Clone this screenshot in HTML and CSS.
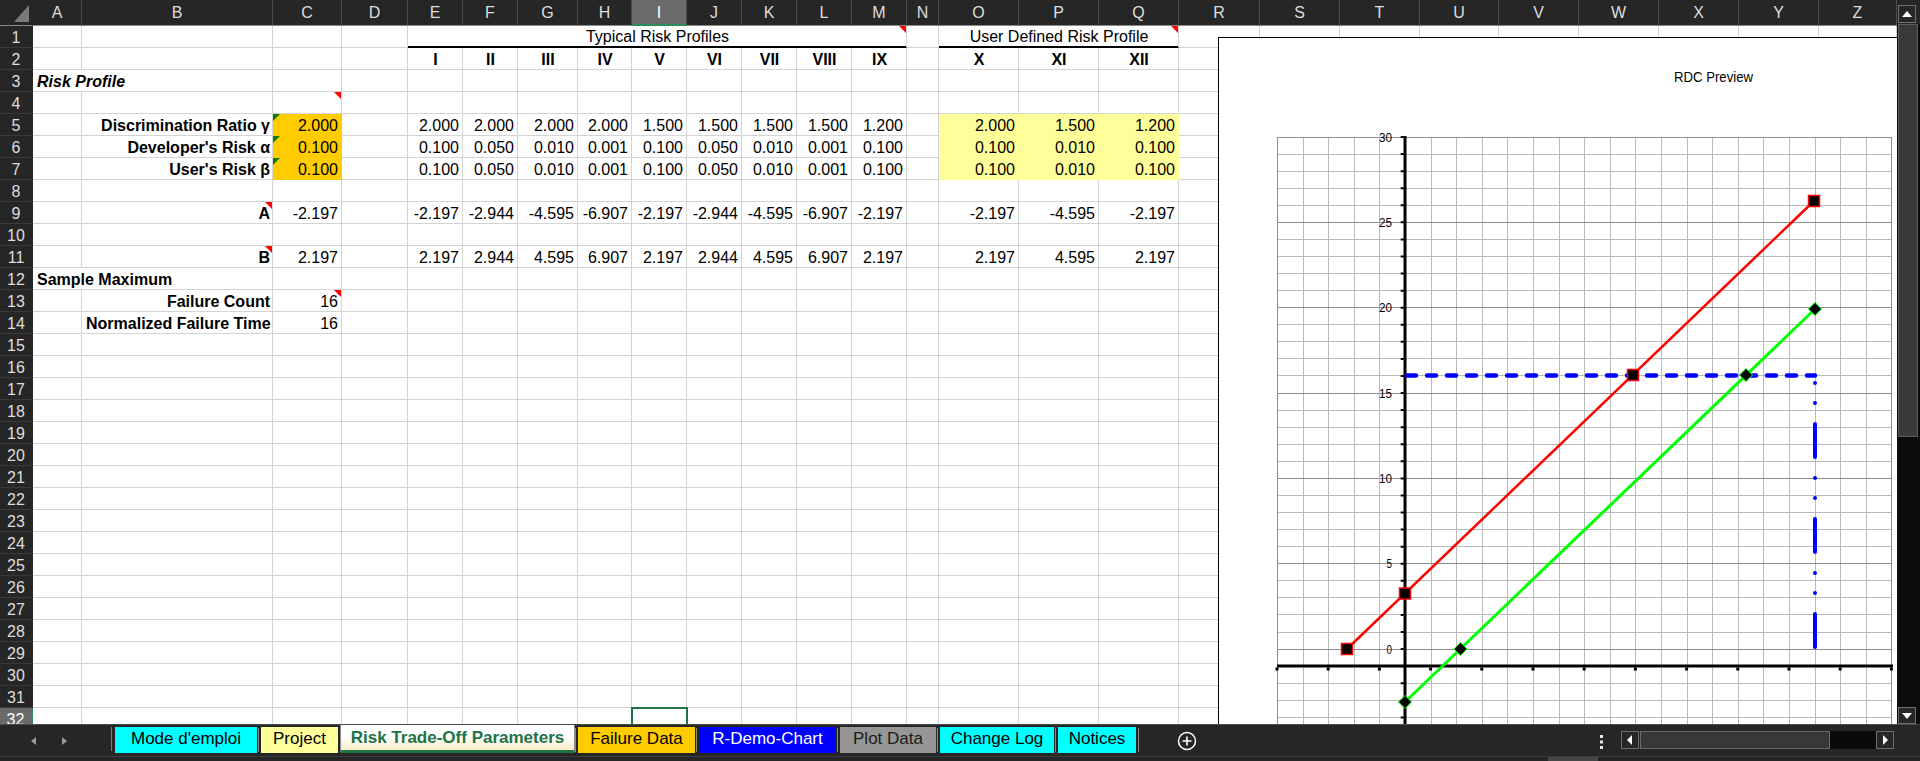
FILE: index.html
```html
<!DOCTYPE html>
<html lang="en">
<head>
<meta charset="utf-8">
<title>Risk Trade-Off Parameters</title>
<link rel="stylesheet" href="styles.css">
</head>
<body>
<div class="app">
  <div class="main">
    <div class="sheet-wrap">
      <table class="sheet">
        <colgroup>
          <col class="cw-rh"><col class="cw-a"><col class="cw-b"><col class="cw-c"><col class="cw-d">
          <col class="cw-55"><col class="cw-55"><col class="cw-g"><col class="cw-h"><col class="cw-55">
          <col class="cw-55"><col class="cw-55"><col class="cw-55"><col class="cw-55"><col class="cw-n">
          <col class="cw-80"><col class="cw-80"><col class="cw-80"><col class="cw-r"><col class="cw-80">
          <col class="cw-80"><col class="cw-u"><col class="cw-80"><col class="cw-80"><col class="cw-80">
          <col class="cw-80"><col class="cw-z">
        </colgroup>
        <thead>
          <tr>
            <th class="corner"></th><th>A</th><th>B</th><th>C</th><th>D</th><th>E</th><th>F</th><th>G</th><th>H</th><th class="sel">I</th><th>J</th><th>K</th><th>L</th><th>M</th><th>N</th><th>O</th><th>P</th><th>Q</th><th>R</th><th>S</th><th>T</th><th>U</th><th>V</th><th>W</th><th>X</th><th>Y</th><th>Z</th>
          </tr>
        </thead>
        <tbody>
          <tr><th>1</th><td></td><td></td><td></td><td></td><td colspan="9" class="ttl cm">Typical Risk Profiles</td><td></td><td colspan="3" class="ttl cm">User Defined Risk Profile</td><td></td><td></td><td></td><td></td><td></td><td></td><td></td><td></td><td></td></tr>
          <tr><th>2</th><td></td><td></td><td></td><td></td><td class="c b">I</td><td class="c b">II</td><td class="c b">III</td><td class="c b">IV</td><td class="c b">V</td><td class="c b">VI</td><td class="c b">VII</td><td class="c b">VIII</td><td class="c b">IX</td><td></td><td class="c b">X</td><td class="c b">XI</td><td class="c b">XII</td><td></td><td></td><td></td><td></td><td></td><td></td><td></td><td></td><td></td></tr>
          <tr><th>3</th><td colspan="2" class="l bi">Risk Profile</td><td></td><td></td><td></td><td></td><td></td><td></td><td></td><td></td><td></td><td></td><td></td><td></td><td></td><td></td><td></td><td></td><td></td><td></td><td></td><td></td><td></td><td></td><td></td></tr>
          <tr><th>4</th><td></td><td></td><td class="cm"></td><td></td><td></td><td></td><td></td><td></td><td></td><td></td><td></td><td></td><td></td><td></td><td></td><td></td><td></td><td></td><td></td><td></td><td></td><td></td><td></td><td></td><td></td><td></td></tr>
          <tr><th>5</th><td></td><td class="r b lbl">Discrimination Ratio γ</td><td class="r inp gt">2.000</td><td></td><td class="r">2.000</td><td class="r">2.000</td><td class="r">2.000</td><td class="r">2.000</td><td class="r">1.500</td><td class="r">1.500</td><td class="r">1.500</td><td class="r">1.500</td><td class="r">1.200</td><td></td><td class="r uy">2.000</td><td class="r uy">1.500</td><td class="r uy">1.200</td><td></td><td></td><td></td><td></td><td></td><td></td><td></td><td></td><td></td></tr>
          <tr><th>6</th><td></td><td class="r b lbl">Developer's Risk α</td><td class="r inp gt">0.100</td><td></td><td class="r">0.100</td><td class="r">0.050</td><td class="r">0.010</td><td class="r">0.001</td><td class="r">0.100</td><td class="r">0.050</td><td class="r">0.010</td><td class="r">0.001</td><td class="r">0.100</td><td></td><td class="r uy">0.100</td><td class="r uy">0.010</td><td class="r uy">0.100</td><td></td><td></td><td></td><td></td><td></td><td></td><td></td><td></td><td></td></tr>
          <tr><th>7</th><td></td><td class="r b lbl">User's Risk β</td><td class="r inp gt">0.100</td><td></td><td class="r">0.100</td><td class="r">0.050</td><td class="r">0.010</td><td class="r">0.001</td><td class="r">0.100</td><td class="r">0.050</td><td class="r">0.010</td><td class="r">0.001</td><td class="r">0.100</td><td></td><td class="r uy">0.100</td><td class="r uy">0.010</td><td class="r uy">0.100</td><td></td><td></td><td></td><td></td><td></td><td></td><td></td><td></td><td></td></tr>
          <tr><th>8</th><td></td><td></td><td></td><td></td><td></td><td></td><td></td><td></td><td></td><td></td><td></td><td></td><td></td><td></td><td></td><td></td><td></td><td></td><td></td><td></td><td></td><td></td><td></td><td></td><td></td><td></td></tr>
          <tr><th>9</th><td></td><td class="r b lbl cm">A</td><td class="r">-2.197</td><td></td><td class="r">-2.197</td><td class="r">-2.944</td><td class="r">-4.595</td><td class="r">-6.907</td><td class="r">-2.197</td><td class="r">-2.944</td><td class="r">-4.595</td><td class="r">-6.907</td><td class="r">-2.197</td><td></td><td class="r">-2.197</td><td class="r">-4.595</td><td class="r">-2.197</td><td></td><td></td><td></td><td></td><td></td><td></td><td></td><td></td><td></td></tr>
          <tr><th>10</th><td></td><td></td><td></td><td></td><td></td><td></td><td></td><td></td><td></td><td></td><td></td><td></td><td></td><td></td><td></td><td></td><td></td><td></td><td></td><td></td><td></td><td></td><td></td><td></td><td></td><td></td></tr>
          <tr><th>11</th><td></td><td class="r b lbl cm">B</td><td class="r">2.197</td><td></td><td class="r">2.197</td><td class="r">2.944</td><td class="r">4.595</td><td class="r">6.907</td><td class="r">2.197</td><td class="r">2.944</td><td class="r">4.595</td><td class="r">6.907</td><td class="r">2.197</td><td></td><td class="r">2.197</td><td class="r">4.595</td><td class="r">2.197</td><td></td><td></td><td></td><td></td><td></td><td></td><td></td><td></td><td></td></tr>
          <tr><th>12</th><td colspan="2" class="l b">Sample Maximum</td><td></td><td></td><td></td><td></td><td></td><td></td><td></td><td></td><td></td><td></td><td></td><td></td><td></td><td></td><td></td><td></td><td></td><td></td><td></td><td></td><td></td><td></td><td></td></tr>
          <tr><th>13</th><td></td><td class="r b lbl">Failure Count</td><td class="r cm">16</td><td></td><td></td><td></td><td></td><td></td><td></td><td></td><td></td><td></td><td></td><td></td><td></td><td></td><td></td><td></td><td></td><td></td><td></td><td></td><td></td><td></td><td></td><td></td></tr>
          <tr><th>14</th><td></td><td class="r b lbl">Normalized Failure Time</td><td class="r">16</td><td></td><td></td><td></td><td></td><td></td><td></td><td></td><td></td><td></td><td></td><td></td><td></td><td></td><td></td><td></td><td></td><td></td><td></td><td></td><td></td><td></td><td></td><td></td></tr>
          <tr><th>15</th><td></td><td></td><td></td><td></td><td></td><td></td><td></td><td></td><td></td><td></td><td></td><td></td><td></td><td></td><td></td><td></td><td></td><td></td><td></td><td></td><td></td><td></td><td></td><td></td><td></td><td></td></tr>
          <tr><th>16</th><td></td><td></td><td></td><td></td><td></td><td></td><td></td><td></td><td></td><td></td><td></td><td></td><td></td><td></td><td></td><td></td><td></td><td></td><td></td><td></td><td></td><td></td><td></td><td></td><td></td><td></td></tr>
          <tr><th>17</th><td></td><td></td><td></td><td></td><td></td><td></td><td></td><td></td><td></td><td></td><td></td><td></td><td></td><td></td><td></td><td></td><td></td><td></td><td></td><td></td><td></td><td></td><td></td><td></td><td></td><td></td></tr>
          <tr><th>18</th><td></td><td></td><td></td><td></td><td></td><td></td><td></td><td></td><td></td><td></td><td></td><td></td><td></td><td></td><td></td><td></td><td></td><td></td><td></td><td></td><td></td><td></td><td></td><td></td><td></td><td></td></tr>
          <tr><th>19</th><td></td><td></td><td></td><td></td><td></td><td></td><td></td><td></td><td></td><td></td><td></td><td></td><td></td><td></td><td></td><td></td><td></td><td></td><td></td><td></td><td></td><td></td><td></td><td></td><td></td><td></td></tr>
          <tr><th>20</th><td></td><td></td><td></td><td></td><td></td><td></td><td></td><td></td><td></td><td></td><td></td><td></td><td></td><td></td><td></td><td></td><td></td><td></td><td></td><td></td><td></td><td></td><td></td><td></td><td></td><td></td></tr>
          <tr><th>21</th><td></td><td></td><td></td><td></td><td></td><td></td><td></td><td></td><td></td><td></td><td></td><td></td><td></td><td></td><td></td><td></td><td></td><td></td><td></td><td></td><td></td><td></td><td></td><td></td><td></td><td></td></tr>
          <tr><th>22</th><td></td><td></td><td></td><td></td><td></td><td></td><td></td><td></td><td></td><td></td><td></td><td></td><td></td><td></td><td></td><td></td><td></td><td></td><td></td><td></td><td></td><td></td><td></td><td></td><td></td><td></td></tr>
          <tr><th>23</th><td></td><td></td><td></td><td></td><td></td><td></td><td></td><td></td><td></td><td></td><td></td><td></td><td></td><td></td><td></td><td></td><td></td><td></td><td></td><td></td><td></td><td></td><td></td><td></td><td></td><td></td></tr>
          <tr><th>24</th><td></td><td></td><td></td><td></td><td></td><td></td><td></td><td></td><td></td><td></td><td></td><td></td><td></td><td></td><td></td><td></td><td></td><td></td><td></td><td></td><td></td><td></td><td></td><td></td><td></td><td></td></tr>
          <tr><th>25</th><td></td><td></td><td></td><td></td><td></td><td></td><td></td><td></td><td></td><td></td><td></td><td></td><td></td><td></td><td></td><td></td><td></td><td></td><td></td><td></td><td></td><td></td><td></td><td></td><td></td><td></td></tr>
          <tr><th>26</th><td></td><td></td><td></td><td></td><td></td><td></td><td></td><td></td><td></td><td></td><td></td><td></td><td></td><td></td><td></td><td></td><td></td><td></td><td></td><td></td><td></td><td></td><td></td><td></td><td></td><td></td></tr>
          <tr><th>27</th><td></td><td></td><td></td><td></td><td></td><td></td><td></td><td></td><td></td><td></td><td></td><td></td><td></td><td></td><td></td><td></td><td></td><td></td><td></td><td></td><td></td><td></td><td></td><td></td><td></td><td></td></tr>
          <tr><th>28</th><td></td><td></td><td></td><td></td><td></td><td></td><td></td><td></td><td></td><td></td><td></td><td></td><td></td><td></td><td></td><td></td><td></td><td></td><td></td><td></td><td></td><td></td><td></td><td></td><td></td><td></td></tr>
          <tr><th>29</th><td></td><td></td><td></td><td></td><td></td><td></td><td></td><td></td><td></td><td></td><td></td><td></td><td></td><td></td><td></td><td></td><td></td><td></td><td></td><td></td><td></td><td></td><td></td><td></td><td></td><td></td></tr>
          <tr><th>30</th><td></td><td></td><td></td><td></td><td></td><td></td><td></td><td></td><td></td><td></td><td></td><td></td><td></td><td></td><td></td><td></td><td></td><td></td><td></td><td></td><td></td><td></td><td></td><td></td><td></td><td></td></tr>
          <tr><th>31</th><td></td><td></td><td></td><td></td><td></td><td></td><td></td><td></td><td></td><td></td><td></td><td></td><td></td><td></td><td></td><td></td><td></td><td></td><td></td><td></td><td></td><td></td><td></td><td></td><td></td><td></td></tr>
          <tr><th class="sel">32</th><td></td><td></td><td></td><td></td><td></td><td></td><td></td><td></td><td class="selcell"></td><td></td><td></td><td></td><td></td><td></td><td></td><td></td><td></td><td></td><td></td><td></td><td></td><td></td><td></td><td></td><td></td><td></td></tr>
        </tbody>
      </table>

      <svg class="chart" width="700" height="700" viewBox="1218 37 700 700">
        <rect x="1218.5" y="37.5" width="720" height="720" fill="#fff" stroke="#000" stroke-width="1"/>
        <text class="chart-title" x="1674" y="82" textLength="79" lengthAdjust="spacingAndGlyphs">RDC Preview</text>
        <path fill="none" stroke="#bababa" stroke-width="1" shape-rendering="crispEdges" d="M1277 154.5h615M1277 171.5h615M1277 188.5h615M1277 205.5h615M1277 239.5h615M1277 256.5h615M1277 273.5h615M1277 290.5h615M1277 324.5h615M1277 341.5h615M1277 358.5h615M1277 375.5h615M1277 410.5h615M1277 427.5h615M1277 444.5h615M1277 461.5h615M1277 495.5h615M1277 512.5h615M1277 529.5h615M1277 546.5h615M1277 580.5h615M1277 597.5h615M1277 614.5h615M1277 632.5h615M1277 666.5h615M1277 683.5h615M1277 700.5h615M1277 717.5h615M1303.5 137v620M1328.5 137v620M1354.5 137v620M1379.5 137v620M1431.5 137v620M1456.5 137v620M1482.5 137v620M1507.5 137v620M1533.5 137v620M1559.5 137v620M1584.5 137v620M1610.5 137v620M1635.5 137v620M1661.5 137v620M1687.5 137v620M1712.5 137v620M1738.5 137v620M1763.5 137v620M1789.5 137v620M1815.5 137v620M1840.5 137v620M1866.5 137v620"/>
        <path fill="none" stroke="#8e8e8e" stroke-width="1" shape-rendering="crispEdges" d="M1277 137.5h615M1277 222.5h615M1277 307.5h615M1277 393.5h615M1277 478.5h615M1277 563.5h615M1277 649.5h615M1277 734.5h615M1277.5 137v620M1891.5 137v620"/>
        <path fill="none" stroke="#000" stroke-width="3" d="M1405 136V760M1277 666H1893"/>
        <path fill="none" stroke="#000" stroke-width="3" stroke-dasharray="2 15.07" d="M1402.2 136V760"/>
        <path fill="none" stroke="#000" stroke-width="3" stroke-dasharray="3 48.2" d="M1275.5 669H1895"/>
        <g class="axis-lbl">
          <text x="1392" y="141.5" textLength="13" lengthAdjust="spacingAndGlyphs">30</text>
          <text x="1392" y="226.8" textLength="13" lengthAdjust="spacingAndGlyphs">25</text>
          <text x="1392" y="312.2" textLength="13" lengthAdjust="spacingAndGlyphs">20</text>
          <text x="1392" y="397.5" textLength="13" lengthAdjust="spacingAndGlyphs">15</text>
          <text x="1392" y="482.9" textLength="13" lengthAdjust="spacingAndGlyphs">10</text>
          <text x="1392" y="568.2" textLength="5.5" lengthAdjust="spacingAndGlyphs">5</text>
          <text x="1392" y="653.6" textLength="5.5" lengthAdjust="spacingAndGlyphs">0</text>
        </g>
        <path fill="none" stroke="#0000ff" stroke-width="4.5" stroke-linecap="round" stroke-dasharray="9 11" d="M1407 375.5H1815"/>
        <path fill="none" stroke="#0000ff" stroke-width="4" stroke-linecap="round" stroke-dasharray="33 21 0 20 0 21" d="M1815 647V377"/>
        <path fill="none" stroke="#ff0000" stroke-width="2.5" d="M1347 649L1814 201"/>
        <path fill="none" stroke="#00ff00" stroke-width="3" d="M1405 702L1815 309"/>
        <g fill="#000" stroke="#ff0000" stroke-width="1.5">
          <rect x="1341.5" y="643.5" width="11" height="11"/>
          <rect x="1399.5" y="588" width="11" height="11"/>
          <rect x="1627.5" y="369.5" width="11" height="11"/>
          <rect x="1808.5" y="195.5" width="11" height="11"/>
        </g>
        <g fill="#000" stroke="#00ff00" stroke-width="1">
          <polygon points="1405,695.5 1411.5,702 1405,708.5 1398.5,702"/>
          <polygon points="1460.5,642.5 1467,649 1460.5,655.5 1454,649"/>
          <polygon points="1746,368.5 1752.5,375 1746,381.5 1739.5,375"/>
          <polygon points="1815,302.5 1821.5,309 1815,315.5 1808.5,309"/>
        </g>
      </svg>
    </div>

    <div class="vscroll">
      <div class="vs-head">
        <div class="vs-btn">
          <svg width="16" height="16" viewBox="0 0 16 16"><polygon points="3,11 8,5 13,11" fill="#fff"/></svg>
        </div>
      </div>
      <div class="vs-thumb"></div>
      <div class="vs-track"></div>
      <div class="vs-btn vs-down">
        <svg width="16" height="16" viewBox="0 0 16 16"><polygon points="3,5 8,11 13,5" fill="#fff"/></svg>
      </div>
    </div>
  </div>

  <div class="tabbar">
    <div class="tabnav">
      <svg width="80" height="24" viewBox="0 0 80 24">
        <polygon points="36,10 31,14 36,18" fill="#9b9b9b"/>
        <polygon points="62,10 67,14 62,18" fill="#9b9b9b"/>
      </svg>
    </div>
    <div class="tab t-mode">Mode d'emploi</div>
    <div class="tab t-proj">Project</div>
    <div class="tab t-active">Risk Trade-Off Parameters</div>
    <div class="tab t-fail">Failure Data</div>
    <div class="tab t-demo">R-Demo-Chart</div>
    <div class="tab t-plot">Plot Data</div>
    <div class="tab t-log">Change Log</div>
    <div class="tab t-notice">Notices</div>
    <div class="tab-end"></div>
    <svg class="addsheet" width="20" height="20" viewBox="0 0 20 20">
      <circle cx="10" cy="10" r="8.5" fill="none" stroke="#fff" stroke-width="1.5"/>
      <path d="M10 5.5V14.5M5.5 10H14.5" stroke="#fff" stroke-width="1.6"/>
    </svg>
    <div class="tabbar-right">
      <svg class="kebab" width="6" height="16" viewBox="0 0 6 16">
        <rect x="1" y="1" width="3" height="3" fill="#e6e6e6"/>
        <rect x="1" y="6.5" width="3" height="3" fill="#e6e6e6"/>
        <rect x="1" y="12" width="3" height="3" fill="#e6e6e6"/>
      </svg>
      <div class="hscroll">
        <div class="hs-btn">
          <svg width="16" height="16" viewBox="0 0 16 16"><polygon points="10,3 5,8 10,13" fill="#fff"/></svg>
        </div>
        <div class="hs-thumb"></div>
        <div class="hs-track"></div>
        <div class="hs-btn">
          <svg width="16" height="16" viewBox="0 0 16 16"><polygon points="6,3 11,8 6,13" fill="#fff"/></svg>
        </div>
      </div>
    </div>
  </div>
  <div class="status">
    <div class="status-line"></div>
    <div class="status-grip"></div>
  </div>
</div>
</body>
</html>
```

FILE: styles.css
```css
* { box-sizing: border-box; }
html, body { margin: 0; padding: 0; }
body {
  width: 1920px;
  height: 761px;
  overflow: hidden;
  background: #262626;
  font-family: "Liberation Sans", Arial, sans-serif;
}
.app { display: flex; flex-direction: column; width: 1920px; height: 761px; }
.main { display: flex; height: 724px; }

.sheet-wrap {
  position: relative;
  width: 1897px;
  height: 724px;
  overflow: hidden;
  background: #fff;
}

/* ---------- grid ---------- */
.sheet {
  table-layout: fixed;
  border-collapse: separate;
  border-spacing: 0;
  width: 1897px;
  font-size: 16px;
  color: #000;
}
col.cw-rh { width: 33px; }
col.cw-a { width: 49px; }
col.cw-b { width: 191px; }
col.cw-c { width: 69px; }
col.cw-d { width: 66px; }
col.cw-55 { width: 55px; }
col.cw-g { width: 60px; }
col.cw-h { width: 54px; }
col.cw-n { width: 32px; }
col.cw-80 { width: 80px; }
col.cw-r { width: 81px; }
col.cw-u { width: 79px; }
col.cw-z { width: 78px; }

.sheet tr { height: 22px; }
.sheet thead tr { height: 26px; }
.sheet td, .sheet th {
  position: relative;
  padding: 3px 3px 0 4px;
  line-height: 18px;
  vertical-align: top;
  white-space: nowrap;
  overflow: hidden;
  font-weight: normal;
  border-right: 1px solid #d4d4d4;
  border-bottom: 1px solid #d4d4d4;
}
.sheet thead th {
  background: #262626;
  color: #dedede;
  text-align: center;
  padding: 4px 0 0;
  border-right: 1px solid #4c4c4c;
  border-bottom: 1px solid #8a8a8a;
}
.sheet thead th.sel {
  background: #6a6a6a;
  color: #fff;
  border-bottom: 2px solid #2b8a57;
}
.sheet thead th.corner { border-right: 1px solid #262626; }
.sheet thead th.corner::after {
  content: "";
  position: absolute;
  right: 3px;
  bottom: 3px;
  border-style: solid;
  border-width: 0 0 17px 15px;
  border-color: transparent transparent #7a7a7a transparent;
}
.sheet tbody th {
  background: #262626;
  color: #dedede;
  text-align: center;
  padding: 3px 0 0;
  border-right: 1px solid #262626;
  border-bottom: 1px solid #3a3a3a;
}
.sheet tbody th.sel {
  background: #6a6a6a;
  color: #fff;
  border-right: 2px solid #2b8a57;
}

.sheet td.r { text-align: right; }
.sheet td.c { text-align: center; }
.sheet td.l { text-align: left; }
.sheet td.b { font-weight: bold; }
.sheet td.bi { font-weight: bold; font-style: italic; }
.sheet td.lbl { padding-right: 2px; }
.sheet td.ttl {
  text-align: center;
  padding-top: 2px;
  border-bottom: 1px solid #000;
  box-shadow: inset 0 -1px 0 #000;
}
.sheet td.inp { background: #ffcc00; border-color: #ffcc00; }
.sheet td.uy { background: #ffff99; border-color: #ffff99; }

.cm::after {
  content: "";
  position: absolute;
  top: 0;
  right: 0;
  border-style: solid;
  border-width: 0 7px 7px 0;
  border-color: transparent #ff0000 transparent transparent;
}
.gt::before {
  content: "";
  position: absolute;
  top: 0;
  left: 0;
  border-style: solid;
  border-width: 7px 7px 0 0;
  border-color: #127a12 transparent transparent transparent;
}
.sheet td.selcell {
  outline: 2px solid #217346;
  outline-offset: -1px;
  z-index: 2;
}

/* ---------- chart ---------- */
.chart {
  position: absolute;
  left: 1218px;
  top: 37px;
  z-index: 5;
}
.chart-title {
  font-family: "Liberation Sans Narrow", "Liberation Sans", Arial, sans-serif;
  font-size: 14px;
  fill: #000;
}
.axis-lbl text {
  font-family: "Liberation Sans Narrow", "Liberation Sans", Arial, sans-serif;
  font-size: 12px;
  fill: #000;
  text-anchor: end;
}

/* ---------- vertical scrollbar ---------- */
.vscroll {
  width: 23px;
  height: 724px;
  display: flex;
  flex-direction: column;
  background: #0b0b0b;
}
.vs-head {
  height: 24px;
  background: #262626;
  padding: 5px 0 0 1px;
}
.vs-btn {
  width: 18px;
  height: 18px;
  border: 1px solid #6e6e6e;
  background: #262626;
  display: flex;
  align-items: center;
  justify-content: center;
}
.vs-thumb {
  height: 413px;
  margin-left: 1px;
  width: 20px;
  background: #3a3a3a;
  border: 1px solid #5c5c5c;
}
.vs-track { flex: 1; }
.vs-down { margin-left: 1px; height: 17px; }

/* ---------- tab bar ---------- */
.tabbar {
  height: 29px;
  display: flex;
  align-items: flex-start;
  background: #262626;
  border-top: 1px solid #4a4a4a;
}
.tabnav {
  width: 112px;
  height: 24px;
  margin-top: 2px;
  border-right: 1px solid #7e7e7e;
}
.tabnav svg { display: block; }
.tab {
  position: relative;
  height: 26px;
  margin-top: 2px;
  margin-left: 4px;
  font-size: 17px;
  line-height: 23px;
  text-align: center;
  white-space: nowrap;
  color: #000;
}
.tab::before {
  content: "";
  position: absolute;
  left: -3px;
  top: 1px;
  bottom: 1px;
  width: 1px;
  background: #8a8a8a;
}
.t-mode { width: 142px; margin-left: 3px; background: #00ffff; }
.t-mode::before { display: none; }
.t-proj { width: 77px; background: #ffff99; }
.t-active {
  width: 235px;
  height: 28px;
  margin-top: 0;
  margin-left: 2px;
  line-height: 25px;
  font-weight: bold;
  color: #217346;
  background: linear-gradient(#ffffff 45%, #fbefc6);
  border-left: 1px solid #8a8a8a;
  border-right: 1px solid #8a8a8a;
  border-bottom: 3px solid #217346;
}
.t-active::before { display: none; }
.t-fail { width: 117px; margin-left: 3px; background: #ffcc00; }
.t-demo { width: 137px; background: #0000ff; color: #fff; }
.t-plot { width: 96px; background: #969696; color: #1a1a1a; }
.t-log { width: 114px; background: #00ffff; }
.t-notice { width: 78px; background: #00ffff; }
.tab-end {
  width: 1px;
  height: 24px;
  margin-top: 3px;
  margin-left: 2px;
  background: #8a8a8a;
}
.addsheet { margin-left: 38px; margin-top: 6px; display: block; }

.tabbar-right {
  margin-left: auto;
  margin-right: 26px;
  display: flex;
  align-items: flex-start;
}
.kebab { display: block; margin-top: 9px; margin-right: 16px; }
.hscroll {
  display: flex;
  height: 18px;
  margin-top: 6px;
}
.hs-btn {
  width: 18px;
  height: 18px;
  border: 1px solid #6e6e6e;
  background: #262626;
  display: flex;
  align-items: center;
  justify-content: center;
}
.hs-thumb {
  width: 190px;
  margin-left: 1px;
  background: #383838;
  border: 1px solid #6a6a6a;
}
.hs-track { width: 46px; background: #0a0a0a; }

/* ---------- status strip ---------- */
.status {
  height: 8px;
  background: #262626;
  padding-top: 3px;
}
.status-line { height: 1px; background: #3c3c3c; }
.status-grip {
  margin-left: 1548px;
  width: 50px;
  height: 4px;
  background: #474747;
}
```
